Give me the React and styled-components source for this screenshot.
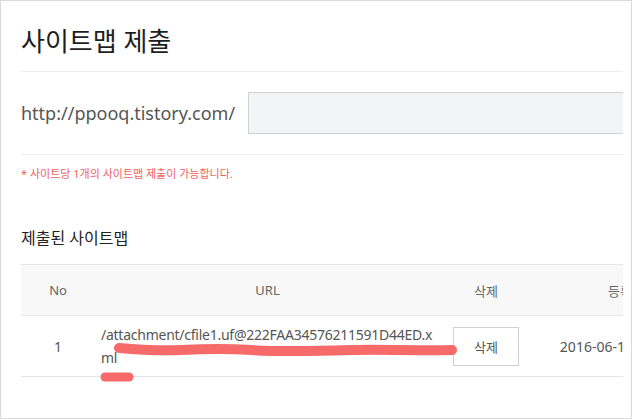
import React from "react";
import styled, { createGlobalStyle } from "styled-components";

const GlobalStyle = createGlobalStyle`
  body {
    margin: 0;
    background: #fff;
    font-family: "Noto Sans", "Noto Sans CJK KR", sans-serif;
  }
`;

const KO = `"Noto Sans", "Noto Sans CJK KR", sans-serif`;

/* gray frame of the captured window */
const Frame = styled.div`
  width: 632px;
  height: 419px;
  box-sizing: border-box;
  border: 1px solid #dadada;
  padding-left: 20px;
  overflow: hidden;
`;

/* content is cut off at the right edge */
const Clip = styled.div`
  width: 602px;
  height: 100%;
  overflow: hidden;
`;

const Page = styled.div`
  width: 780px;
`;

const Header = styled.div`
  height: 71px;
  box-sizing: border-box;
  padding-top: 21px;
  border-bottom: 1px solid #ededed;
`;

const Title = styled.h1`
  margin: 0;
  font-family: ${KO};
  font-size: 26px;
  line-height: 38px;
  font-weight: 400;
  color: #1e1e1e;
`;

const FormRow = styled.div`
  display: flex;
  align-items: center;
  gap: 13px;
  padding: 20px 0;
  border-bottom: 1px solid #ededed;
`;

const Prefix = styled.span`
  font-family: ${KO};
  font-size: 18px;
  color: #555;
`;

const UrlInput = styled.div`
  flex: 1;
  height: 42px;
  box-sizing: border-box;
  background: #f2f4f5;
  border: 1px solid #cfd2d6;
`;

const Notice = styled.p`
  margin: 0;
  padding-top: 11px;
  font-family: ${KO};
  font-size: 11px;
  line-height: 16px;
  color: #f0625f;
`;

const SubTitle = styled.h2`
  margin: 0;
  padding-top: 44px;
  font-family: ${KO};
  font-size: 16px;
  line-height: 24px;
  font-weight: 400;
  color: #222;
`;

const Table = styled.div`
  margin-top: 14px;
  border-top: 1px solid #e6e6e6;
`;

const Row = styled.div`
  position: relative;
  display: grid;
  grid-template-columns: 74px 345px 92px 188px;
  align-items: center;
  height: ${(p) => (p.head ? "50px" : "60px")};
  background: ${(p) => (p.head ? "#f8f8f8" : "#fff")};
  border-bottom: 1px solid #e6e6e6;
`;

const Cell = styled.div`
  font-family: ${KO};
  font-size: ${(p) => (p.head ? "13px" : "14px")};
  color: ${(p) => (p.head ? "#666" : "#555")};
  text-align: center;
  white-space: nowrap;
`;

const UrlText = styled.div`
  width: 332px;
  padding-left: 6px;
  font-family: ${KO};
  font-size: 14px;
  line-height: 23px;
  letter-spacing: -0.25px;
  color: #555;
  word-break: break-all;
`;

const DeleteButton = styled.button`
  width: 66px;
  height: 39px;
  margin-left: 13px;
  padding: 0;
  background: #fff;
  border: 1px solid #d0d0d0;
  font-family: ${KO};
  font-size: 13px;
  color: #555;
`;

/* red marker scribbled over the screenshot */
const Marker = styled.svg`
  position: absolute;
  left: 0;
  top: 0;
  pointer-events: none;
  overflow: visible;
`;

const rows = [
  {
    no: 1,
    url: "/attachment/cfile1.uf@222FAA34576211591D44ED.xml",
    date: "2016-06-13 15:42:11",
  },
];

export default function App() {
  return (
    <>
      <GlobalStyle />
      <Frame>
        <Clip>
          <Page>
            <Header>
              <Title>사이트맵 제출</Title>
            </Header>
            <FormRow>
              <Prefix>http://ppooq.tistory.com/</Prefix>
              <UrlInput />
            </FormRow>
            <Notice>* 사이트당 1개의 사이트맵 제출이 가능합니다.</Notice>
            <SubTitle>제출된 사이트맵</SubTitle>
            <Table>
              <Row head>
                <Cell head>No</Cell>
                <Cell head>URL</Cell>
                <Cell head>삭제</Cell>
                <Cell head>등록일</Cell>
              </Row>
              {rows.map((r) => (
                <Row key={r.no}>
                  <Cell>{r.no}</Cell>
                  <UrlText>{r.url}</UrlText>
                  <div>
                    <DeleteButton>삭제</DeleteButton>
                  </div>
                  <Cell>{r.date}</Cell>
                  <Marker width="1" height="1">
                    <path
                      d="M98 32 C 120 34, 140 35, 160 34 S 200 32, 230 34 S 300 35, 330 34 S 400 35, 431 34"
                      stroke="#f76a6a"
                      strokeWidth="10"
                      strokeLinecap="round"
                      fill="none"
                    />
                    <path
                      d="M84 61 L 108 61"
                      stroke="#f76a6a"
                      strokeWidth="9"
                      strokeLinecap="round"
                      fill="none"
                    />
                  </Marker>
                </Row>
              ))}
            </Table>
          </Page>
        </Clip>
      </Frame>
    </>
  );
}
